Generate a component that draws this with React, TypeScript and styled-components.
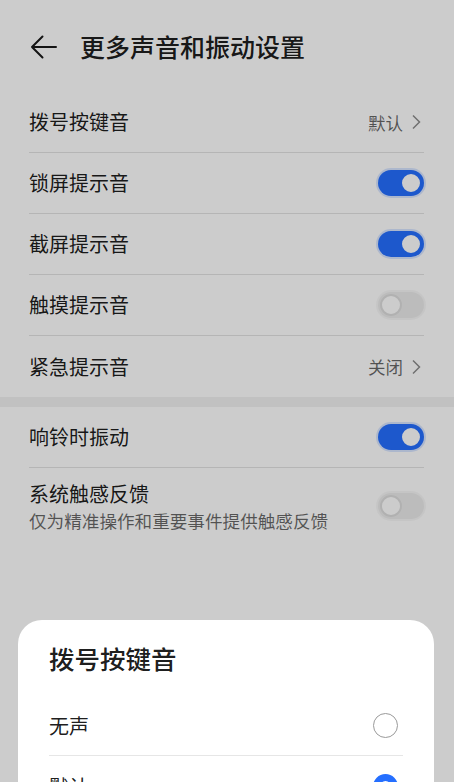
import React from "react";
import styled, { createGlobalStyle } from "styled-components";

const GlobalStyle = createGlobalStyle`
  html, body {
    margin: 0;
    padding: 0;
    background: #ffffff;
    overflow: hidden;
  }
  body {
    font-family: "Noto Sans CJK SC", "Noto Sans", sans-serif;
    color: rgba(0, 0, 0, 0.9);
  }
`;

const Page = styled.div`
  width: 454px;
  height: 782px;
  background: #ffffff;
`;

const Header = styled.header`
  height: 92px;
  display: flex;
  align-items: center;
  padding-left: 30px;
  box-sizing: border-box;
`;

const BackButton = styled.div`
  width: 28px;
  height: 28px;
  display: flex;
  align-items: center;
  margin-right: 22px;
  margin-top: 2px;
`;

const Title = styled.h1`
  margin: 0;
  font-size: 25px;
  font-weight: 500;
`;

const Group = styled.section`
  padding: 0 30px 0 29px;
`;

const Gap = styled.div`
  height: 10px;
  background: #f2f2f2;
`;

interface RowProps {
  tall?: boolean;
  last?: boolean;
}

const Row = styled.div<RowProps>`
  display: flex;
  align-items: center;
  justify-content: space-between;
  min-height: ${(p) => (p.tall ? "74px" : "61px")};
  box-sizing: border-box;
  border-bottom: ${(p) => (p.last ? "none" : "1px solid #e3e3e3")};
  padding-top: ${(p) => (p.tall ? "2px" : "0")};
`;

const Labels = styled.div`
  display: flex;
  flex-direction: column;
`;

const Label = styled.span`
  font-size: 20px;
  line-height: 28px;
`;

const SubLabel = styled.span`
  font-size: 17.6px;
  line-height: 22px;
  margin-top: 2px;
  color: rgba(0, 0, 0, 0.6);
`;

const Value = styled.div`
  display: flex;
  align-items: center;
  gap: 8px;
  font-size: 17.5px;
  color: rgba(0, 0, 0, 0.6);
  margin-right: 3px;
`;

interface ToggleProps {
  on: boolean;
}

const Toggle = styled.div<ToggleProps>`
  position: relative;
  width: 46px;
  height: 26px;
  border-radius: 13px;
  box-sizing: border-box;
  background: ${(p) => (p.on ? "#256fff" : "#ececec")};
  box-shadow: ${(p) =>
    p.on ? "0 0 0 2px rgba(37, 111, 255, 0.18)" : "0 0 0 2px rgba(0,0,0,0.03)"};
  flex-shrink: 0;
`;

const Knob = styled.span<ToggleProps>`
  position: absolute;
  top: 2px;
  left: ${(p) => (p.on ? "22px" : "2px")};
  width: 22px;
  height: 22px;
  border-radius: 50%;
  box-sizing: border-box;
  background: #ffffff;
  border: 2px solid ${(p) => (p.on ? "#256fff" : "#dedede")};
`;

const Scrim = styled.div`
  position: fixed;
  inset: 0;
  background: rgba(0, 0, 0, 0.2);
`;

const Sheet = styled.div`
  position: fixed;
  left: 18px;
  right: 20px;
  top: 620px;
  height: 260px;
  background: #ffffff;
  border-radius: 24px 24px 0 0;
  padding: 21px 31px 0 31px;
  box-sizing: border-box;
`;

const SheetTitle = styled.h2`
  margin: 0 0 20px;
  font-size: 25.5px;
  line-height: 34px;
  font-weight: 500;
`;

const Option = styled.div<RowProps>`
  display: flex;
  align-items: center;
  justify-content: space-between;
  height: 60px;
  border-bottom: ${(p) => (p.last ? "none" : "1px solid #e6e6e6")};
  padding-right: 5px;
`;

const OptionLabel = styled.span`
  font-size: 20px;
`;

interface RadioProps {
  checked: boolean;
}

const Radio = styled.span<RadioProps>`
  width: 25px;
  height: 25px;
  border-radius: 50%;
  box-sizing: border-box;
  border: ${(p) => (p.checked ? "7px solid #256fff" : "1.5px solid #9a9a9a")};
  background: #ffffff;
`;

const Chevron = () => (
  <svg width="10" height="16" viewBox="0 0 10 16" fill="none">
    <path d="M2 1.5 L8.5 8 L2 14.5" stroke="rgba(0,0,0,0.45)" strokeWidth="1.5" />
  </svg>
);

const BackArrow = () => (
  <svg width="28" height="24" viewBox="0 0 28 24" fill="none">
    <path
      d="M26 12 H2 M12.5 1.5 L2 12 L12.5 22.5"
      stroke="#1a1a1a"
      strokeWidth="2"
      strokeLinecap="round"
      strokeLinejoin="round"
    />
  </svg>
);

interface SwitchRowProps {
  label: string;
  sub?: string;
  on: boolean;
  last?: boolean;
}

const SwitchRow: React.FC<SwitchRowProps> = ({ label, sub, on, last }) => (
  <Row tall={!!sub} last={last}>
    <Labels>
      <Label>{label}</Label>
      {sub && <SubLabel>{sub}</SubLabel>}
    </Labels>
    <Toggle on={on}>
      <Knob on={on} />
    </Toggle>
  </Row>
);

const LinkRow: React.FC<{ label: string; value: string; last?: boolean }> = ({
  label,
  value,
  last,
}) => (
  <Row last={last}>
    <Label>{label}</Label>
    <Value>
      {value}
      <Chevron />
    </Value>
  </Row>
);

const App: React.FC = () => {
  return (
    <>
      <GlobalStyle />
      <Page>
        <Header>
          <BackButton>
            <BackArrow />
          </BackButton>
          <Title>更多声音和振动设置</Title>
        </Header>
        <Group>
          <LinkRow label="拨号按键音" value="默认" />
          <SwitchRow label="锁屏提示音" on />
          <SwitchRow label="截屏提示音" on />
          <SwitchRow label="触摸提示音" on={false} />
          <LinkRow label="紧急提示音" value="关闭" last />
        </Group>
        <Gap />
        <Group>
          <SwitchRow label="响铃时振动" on />
          <SwitchRow
            label="系统触感反馈"
            sub="仅为精准操作和重要事件提供触感反馈"
            on={false}
            last
          />
        </Group>
      </Page>
      <Scrim />
      <Sheet>
        <SheetTitle>拨号按键音</SheetTitle>
        <Option>
          <OptionLabel>无声</OptionLabel>
          <Radio checked={false} />
        </Option>
        <Option last>
          <OptionLabel>默认</OptionLabel>
          <Radio checked />
        </Option>
      </Sheet>
    </>
  );
};

export default App;
